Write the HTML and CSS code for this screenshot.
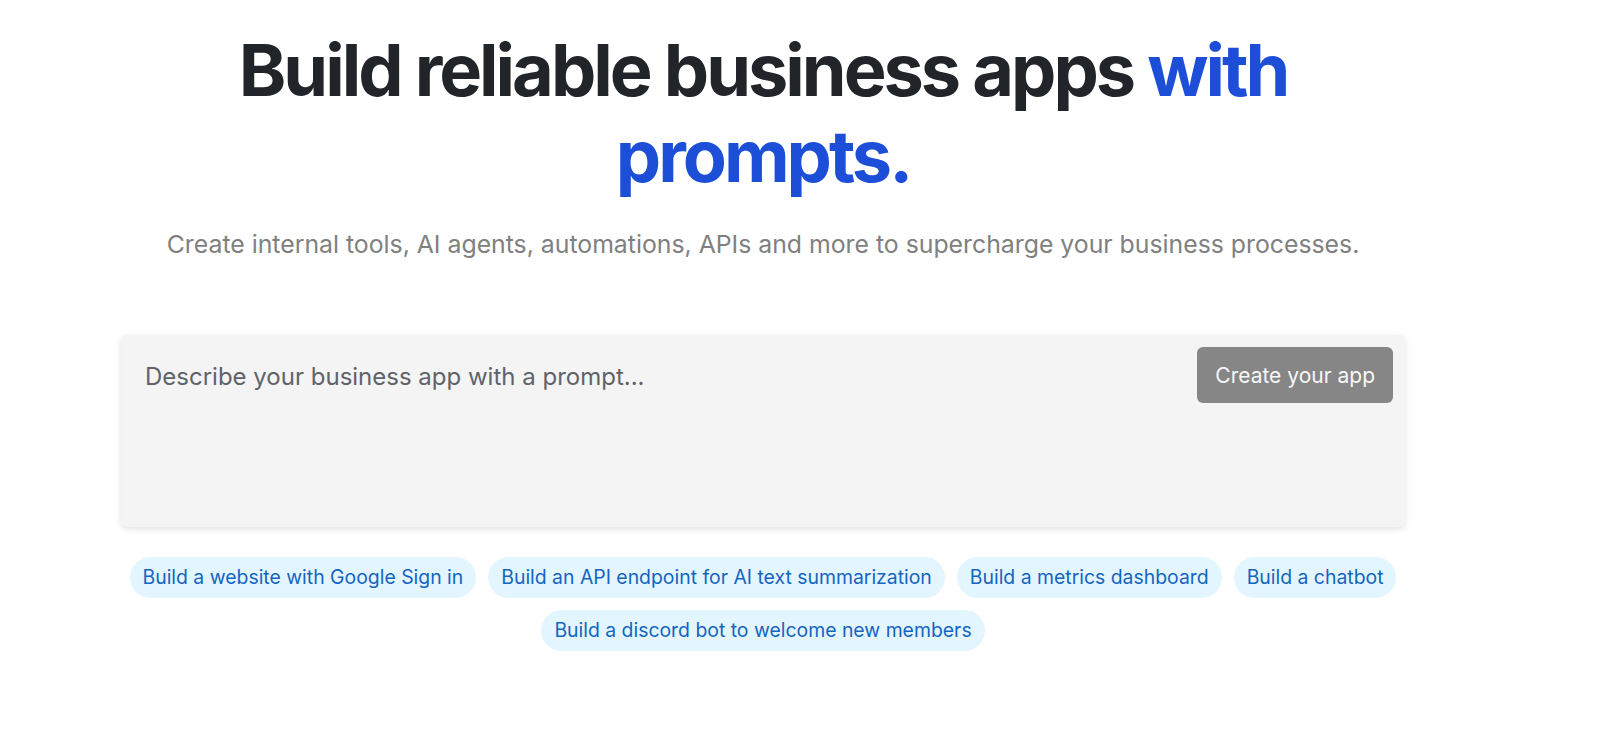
FILE: index.html
```html
<!DOCTYPE html>
<html lang="en">
<head>
    <meta charset="UTF-8">
    <meta name="viewport" content="width=device-width, initial-scale=1.0">
    <title>Build reliable business apps with prompts</title>
    <link rel="stylesheet" href="styles.css">
</head>
<body>
    <div class="page">
        <div class="hero">
            <h1 class="title">Build reliable business apps <span class="accent">with prompts.</span></h1>
            <p class="lead">Create internal tools, AI agents, automations, APIs and more to supercharge your business processes.</p>

            <div class="prompt-box">
                <div class="prompt-text">Describe your business app with a prompt...</div>
                <button class="create-btn">Create your app</button>
            </div>

            <ul class="chips">
                <li>Build a website with Google Sign in</li>
                <li>Build an API endpoint for AI text summarization</li>
                <li>Build a metrics dashboard</li>
                <li>Build a chatbot</li>
                <li>Build a discord bot to welcome new members</li>
            </ul>
        </div>
    </div>
</body>
</html>
```

FILE: styles.css
```css
*{
    margin: 0;
    padding: 0;
    box-sizing: border-box;
}
body{
    background-color: #fff;
    font-family: Inter, "Noto Sans", sans-serif;
}
.page{
    padding: 27px 72px 0 0;
}
.hero{
    max-width: 1284px;
    margin: 0 auto;
    text-align: center;
}
.title{
    font-size: 72px;
    font-weight: 700;
    line-height: 1.2;
    letter-spacing: -3px;
    color: #212529;
}
.title .accent{
    color: #1d4ed8;
}
.lead{
    margin-top: 27px;
    font-size: 24.8px;
    line-height: 1.4;
    color: #808080;
}
.prompt-box{
    margin-top: 74px;
    height: 192px;
    background-color: #f4f4f4;
    border-radius: 6px;
    box-shadow: 0 2px 6px rgba(0,0,0,0.12);
    display: flex;
    justify-content: space-between;
    align-items: flex-start;
    padding: 12px 12px 0 24px;
    text-align: left;
}
.prompt-text{
    padding-top: 12px;
    font-size: 24px;
    line-height: 1.5;
    color: #5f6368;
}
.create-btn{
    height: 56px;
    padding: 0 18px;
    border: none;
    border-radius: 6px;
    background-color: #868686;
    color: #f7f7f7;
    font-family: inherit;
    font-size: 21px;
    cursor: pointer;
}
.chips{
    margin-top: 30px;
    list-style: none;
    display: flex;
    flex-wrap: wrap;
    justify-content: center;
    gap: 12px;
}
.chips li{
    padding: 7px 13px;
    border-radius: 21px;
    background-color: #e3f5fe;
    color: #1565c0;
    font-size: 19.4px;
    line-height: 27px;
    cursor: pointer;
}
```
